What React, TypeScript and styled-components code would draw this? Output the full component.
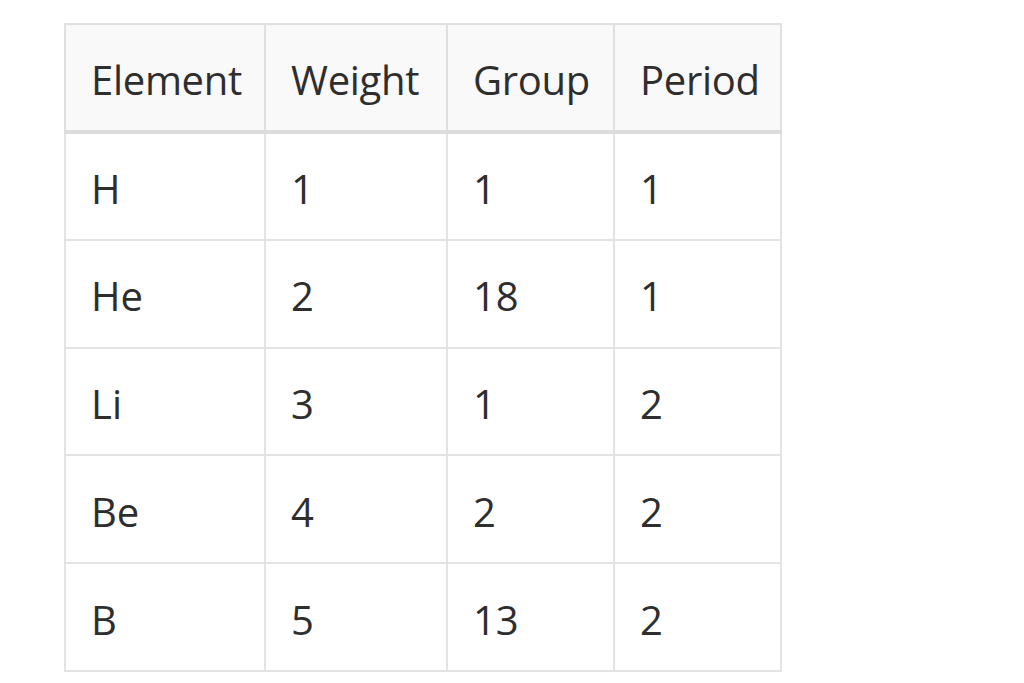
import React from 'react';
import styled, { createGlobalStyle } from 'styled-components';

const GlobalStyle = createGlobalStyle`
  html, body {
    margin: 0;
    padding: 0;
    background: #ffffff;
  }
  body {
    font-family: "Open Sans", "Noto Sans", sans-serif;
    color: #2e2e2e;
  }
`;

const headers = ['Element', 'Weight', 'Group', 'Period'];
const widths = [200, 182, 167, 167];

const rows: [string, number, number, number][] = [
  ['H', 1, 1, 1],
  ['He', 2, 18, 1],
  ['Li', 3, 1, 2],
  ['Be', 4, 2, 2],
  ['B', 5, 13, 2],
];

const Page = styled.div`
  padding: 23px 0 0 64px;
`;

const Table = styled.table`
  width: 718px;
  border-collapse: collapse;
  table-layout: fixed;
  font-size: 40px;
`;

const HeadCell = styled.th`
  height: 108px;
  padding: 3px 0 0 25px;
  text-align: left;
  font-weight: 400;
  background: #f9f9f9;
  border: 2px solid #e0e0e0;
  border-bottom: 4px solid #dcdcdc;
  box-sizing: border-box;
  white-space: nowrap;
  overflow: visible;
  letter-spacing: -0.3px;
`;

const Cell = styled.td`
  height: 107.8px;
  padding: 4px 0 0 25px;
  text-align: left;
  border: 2px solid #e3e3e3;
  box-sizing: border-box;
`;

export default function App() {
  return (
    <>
      <GlobalStyle />
      <Page>
        <Table>
          <colgroup>
            {widths.map((w, i) => (
              <col key={i} style={{ width: w }} />
            ))}
          </colgroup>
          <thead>
            <tr>
              {headers.map((h) => (
                <HeadCell key={h}>{h}</HeadCell>
              ))}
            </tr>
          </thead>
          <tbody>
            {rows.map((r) => (
              <tr key={r[0]}>
                {r.map((v, i) => (
                  <Cell key={i}>{v}</Cell>
                ))}
              </tr>
            ))}
          </tbody>
        </Table>
      </Page>
    </>
  );
}
